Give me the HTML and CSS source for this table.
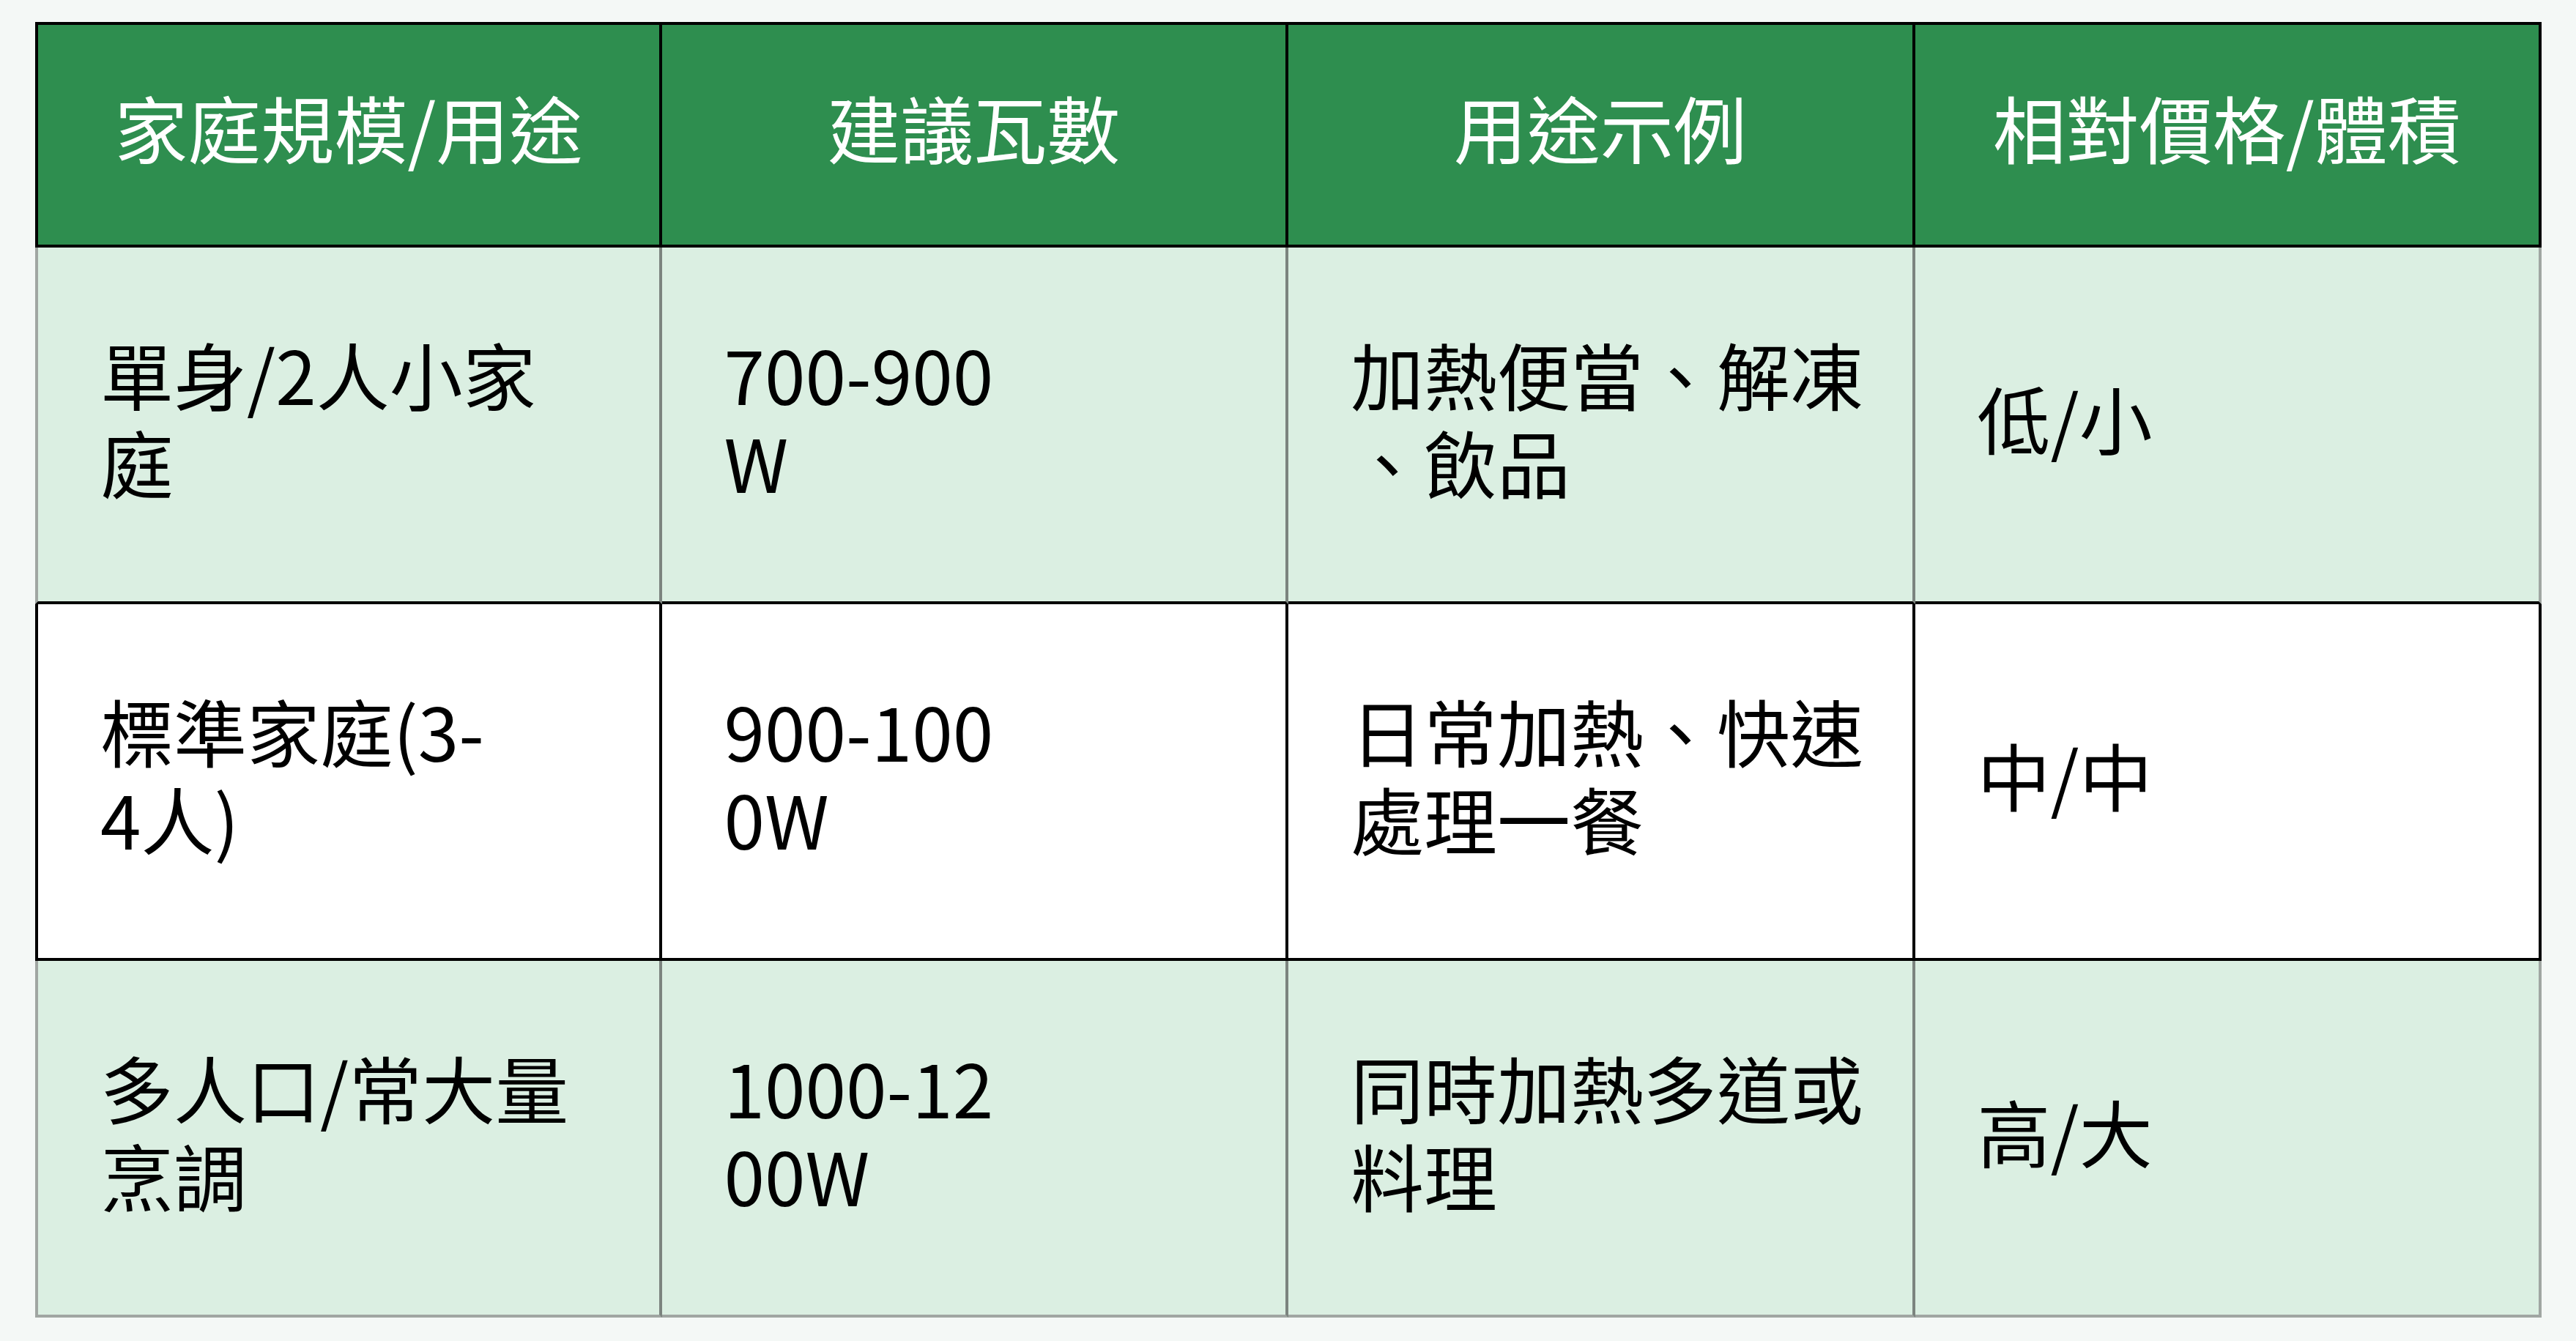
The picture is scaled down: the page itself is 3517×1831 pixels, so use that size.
FILE: index.html
```html
<!DOCTYPE html>
<html lang="zh-Hant">
<head>
<meta charset="utf-8">
<title>微波爐瓦數選擇</title>
<link rel="stylesheet" href="styles.css">
</head>
<body>
<table class="spec">
  <colgroup>
    <col class="c1"><col class="c2"><col class="c3"><col class="c4">
  </colgroup>
  <thead>
    <tr class="head">
      <th>家庭規模/用途</th>
      <th>建議瓦數</th>
      <th>用途示例</th>
      <th>相對價格/體積</th>
    </tr>
  </thead>
  <tbody>
    <tr class="row light">
      <td>單身/2人小家<br>庭</td>
      <td>700-900<br>W</td>
      <td>加熱便當、解凍<br>、飲品</td>
      <td>低/小</td>
    </tr>
    <tr class="row plain">
      <td>標準家庭(3-<br>4人)</td>
      <td>900-100<br>0W</td>
      <td>日常加熱、快速<br>處理一餐</td>
      <td>中/中</td>
    </tr>
    <tr class="row light last">
      <td>多人口/常大量<br>烹調</td>
      <td>1000-12<br>00W</td>
      <td>同時加熱多道或<br>料理</td>
      <td>高/大</td>
    </tr>
  </tbody>
</table>
</body>
</html>
```

FILE: styles.css
```css
html, body {
  margin: 0;
  padding: 0;
  background: #f4f8f6;
}

body {
  padding: 30px 0 0 48px;
  font-family: "Noto Sans CJK TC", "Noto Sans CJK SC", "Noto Sans", sans-serif;
}

.spec {
  width: 3422px;
  table-layout: fixed;
  border-collapse: separate;
  border-spacing: 0;
  font-size: 100px;
  line-height: 120px;
}

.spec th,
.spec td {
  box-sizing: border-box;
  vertical-align: middle;
  white-space: nowrap;
  font-weight: 400;
  border-right: 4px solid #000;
  border-bottom: 4px solid #000;
}

.spec th:first-child,
.spec td:first-child {
  border-left: 4px solid #000;
}

.head th {
  height: 308px;
  background: #2e8e4f;
  color: #fff;
  text-align: center;
  border-top: 4px solid #000;
  padding: 0 20px 22px;
}

.row td {
  height: 487px;
  color: #000;
  text-align: left;
  padding: 0 40px 20px 85px;
}

.light td {
  background: #dbefe2;
  border-right-color: #7c847f;
}

.light td:first-child {
  border-left-color: #a0a6a2;
}

.light td:last-child {
  border-right-color: #a0a6a2;
}

.plain td {
  background: #ffffff;
}

.last td {
  border-bottom-color: #a0a6a2;
}
```
